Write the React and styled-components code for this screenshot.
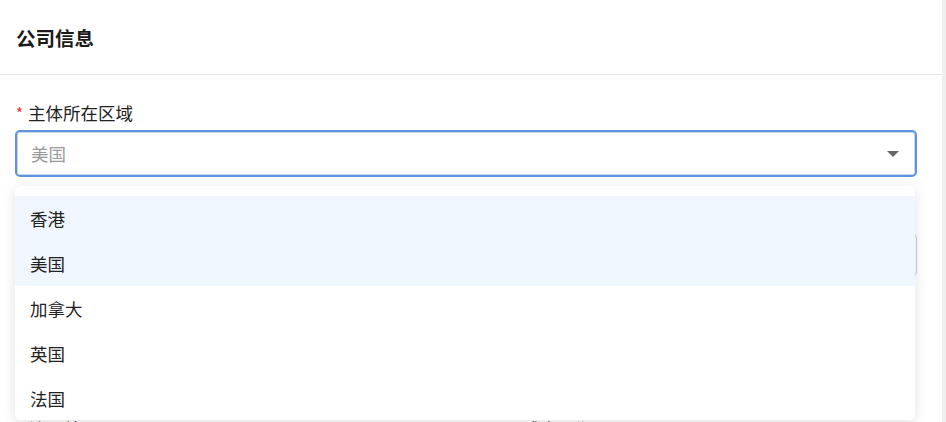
import React from 'react';
import styled, { createGlobalStyle } from 'styled-components';

const Global = createGlobalStyle`
  html, body { margin: 0; padding: 0; background: #fff; }
  body {
    font-family: "Noto Sans CJK SC", "Noto Sans", sans-serif;
    color: #1f1f1f;
    overflow: hidden;
  }
`;

const Page = styled.div`
  display: flex;
  width: 946px;
  height: 422px;
  overflow: hidden;
`;

const Panel = styled.div`
  position: relative;
  flex: 1;
  background: #fff;
`;

const Track = styled.div`
  width: 4px;
  background: #efefef;
`;

const Header = styled.div`
  height: 74px;
  display: flex;
  align-items: center;
  padding: 0 16px;
  border-bottom: 1px solid #e6e6e6;
`;

const Title = styled.h2`
  margin: 0;
  font-size: 19.5px;
  font-weight: 700;
  color: #1a1a1a;
`;

const Form = styled.div`
  padding: 28px 25px 0 15px;
  display: flex;
  flex-direction: column;
`;

const Field = styled.div`
  display: flex;
  flex-direction: column;
  margin-bottom: ${p => p.$mb || 0}px;
`;

const Label = styled.label`
  display: flex;
  align-items: center;
  font-size: 17.5px;
  line-height: 20px;
  color: #222;
  margin: 0 0 ${p => p.$gap || 7}px 1px;
`;

const Star = styled.span`
  color: #e0322d;
  margin-right: 5px;
  font-size: 15px;
`;

const SelectBox = styled.div`
  height: 47px;
  box-sizing: border-box;
  border: 2px solid #5f93de;
  border-radius: 5px;
  box-shadow: inset 0 0 0 1px #c5d6ef;
  display: flex;
  align-items: center;
  justify-content: space-between;
  padding: 0 16px 0 14px;
`;

const Placeholder = styled.span`
  font-size: 17.5px;
  color: #9a9a9a;
`;

const Caret = styled.span`
  width: 0;
  height: 0;
  border-left: 6px solid transparent;
  border-right: 6px solid transparent;
  border-top: 6px solid #666;
`;

const Input = styled.div`
  height: 42px;
  box-sizing: border-box;
  border: 1px solid #cfcfcf;
  border-radius: 4px;
`;

const Row = styled.div`
  display: grid;
  grid-template-columns: 459px 1fr;
  padding-left: 28px;
`;

const Dropdown = styled.ul`
  position: absolute;
  left: 15px;
  top: 186px;
  width: 900px;
  margin: 0;
  padding: 10px 0 0;
  list-style: none;
  background: #fff;
  border-radius: 6px;
  box-shadow: 0 3px 14px rgba(0, 0, 0, 0.12);
  height: 234px;
  box-sizing: border-box;
  overflow: hidden;
`;

const Option = styled.li`
  height: 45px;
  display: flex;
  align-items: center;
  padding-left: 15px;
  font-size: 17.5px;
  color: #222;
  background: ${p => (p.$active ? '#f0f6fe' : '#fff')};
`;

const options = [
  { name: '香港', active: true },
  { name: '美国', active: true },
  { name: '加拿大' },
  { name: '英国' },
  { name: '法国' },
];

export default function App() {
  return (
    <Page>
      <Global />
      <Panel>
        <Header>
          <Title>公司信息</Title>
        </Header>
        <Form>
          <Field $mb={26}>
            <Label>
              <Star>*</Star>主体所在区域
            </Label>
            <SelectBox>
              <Placeholder>美国</Placeholder>
              <Caret />
            </SelectBox>
          </Field>
          <Field $mb={143}>
            <Label $gap={11}>
              <Star>*</Star>公司名称
            </Label>
            <Input />
          </Field>
        </Form>
        <Row>
          <Label>注册编号</Label>
          <Label>公司成立日期</Label>
        </Row>
        <Dropdown>
          {options.map(o => (
            <Option key={o.name} $active={o.active}>
              {o.name}
            </Option>
          ))}
        </Dropdown>
      </Panel>
      <Track />
    </Page>
  );
}
